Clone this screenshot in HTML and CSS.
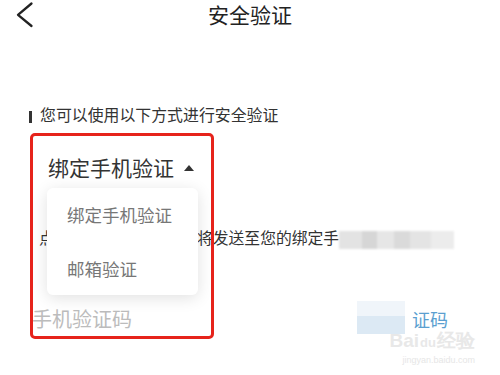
FILE: index.html
```html
<!DOCTYPE html>
<html lang="zh">
<head>
<meta charset="utf-8">
<link rel="stylesheet" href="styles.css">
</head>
<body>
<div class="page">
  <header class="header">
    <div class="back">
      <svg width="50" height="29" viewBox="0 0 50 29"><polyline points="31.5,3.5 18,14.8 31.5,26" fill="none" stroke="#222" stroke-width="2.3" stroke-linecap="round" stroke-linejoin="round"/></svg>
    </div>
    <h1 class="title">安全验证</h1>
    <div></div>
  </header>

  <div class="tip"><span class="tip-bar"></span>您可以使用以下方式进行安全验证</div>

  <div class="select">绑定手机验证<span class="caret"></span></div>

  <div class="hint">点击获取，短信验证码将发送至您的绑定手<span class="blur"></span></div>

  <div class="code-row">
    <span class="placeholder">手机验证码</span>
    <span class="get-code"><span class="code-mask"></span><span class="code-text">证码</span></span>
  </div>

  <div class="menu">
    <div class="menu-item">绑定手机验证</div>
    <div class="menu-item">邮箱验证</div>
  </div>

  <div class="mark-box"></div>

  <div class="watermark">
    <div class="wm-logo">Bai<span class="wm-du">du</span>经验</div>
    <div class="wm-url">jingyan.baidu.com</div>
  </div>
</div>
</body>
</html>
```

FILE: styles.css
```css
* { box-sizing: border-box; }
html, body { margin: 0; padding: 0; background: #fff; }
body {
  font-family: "Noto Sans CJK SC", "Noto Sans", sans-serif;
  color: #333;
}
.page {
  position: relative;
  width: 500px;
  height: 375px;
  overflow: hidden;
}
.header {
  display: grid;
  grid-template-columns: 50px 1fr 50px;
  height: 29px;
}
.back svg { display: block; }
.title {
  margin: 0;
  text-align: center;
  font-size: 21px;
  font-weight: 400;
  line-height: 29px;
  color: #222;
}
.tip {
  display: flex;
  align-items: center;
  margin-top: 76px;
  padding-left: 29px;
  height: 20px;
  font-size: 15.9px;
  line-height: 20px;
  color: #333;
}
.tip-bar {
  display: inline-block;
  width: 3px;
  height: 12px;
  margin-top: 3px;
  margin-right: 8px;
  background: #333;
}
.select {
  display: flex;
  align-items: center;
  margin-top: 28px;
  padding-left: 48px;
  height: 28px;
  font-size: 21px;
  line-height: 28px;
  color: #333;
}
.caret {
  width: 0;
  height: 0;
  margin-left: 10px;
  margin-top: 2px;
  border-left: 5px solid transparent;
  border-right: 5px solid transparent;
  border-bottom: 6px solid #333;
}
.hint {
  display: flex;
  align-items: center;
  margin-top: 46px;
  padding-left: 39px;
  height: 22px;
  font-size: 15.8px;
  line-height: 22px;
  color: #333;
  white-space: nowrap;
}
.blur {
  display: inline-block;
  width: 115px;
  height: 18px;
  margin-top: 3px;
  background: linear-gradient(90deg, #e3e3e3 0 20%, #d6d6d6 20% 33%, #e6e6e6 33% 48%, #dadada 48% 62%, #e4e4e4 62% 80%, #ececec 80% 100%);
  filter: blur(1px);
}
.code-row {
  display: flex;
  align-items: center;
  justify-content: space-between;
  margin-top: 56px;
  padding-left: 32px;
  padding-right: 52px;
  height: 28px;
}
.placeholder {
  font-size: 20px;
  line-height: 28px;
  color: #bcbcbc;
}
.get-code {
  display: flex;
  align-items: center;
}
.code-mask {
  width: 48px;
  height: 33px;
  margin-right: 7px;
  margin-top: -4px;
  background: linear-gradient(180deg, #f0f5fa 0 45%, #dce9f4 45% 100%);
}
.code-text {
  font-size: 18px;
  line-height: 28px;
  color: #5b9fd0;
}
.menu {
  position: absolute;
  left: 47px;
  top: 188px;
  width: 151px;
  height: 107px;
  background: #fff;
  border-radius: 6px;
  box-shadow: 0 3px 16px rgba(0, 0, 0, 0.12);
  display: flex;
  flex-direction: column;
}
.menu-item {
  flex: 1;
  display: flex;
  align-items: center;
  padding-left: 20px;
  font-size: 17.5px;
  color: #777;
}
.mark-box {
  position: absolute;
  left: 30px;
  top: 133px;
  width: 184px;
  height: 206px;
  border: 3px solid #e6231b;
  border-radius: 5px;
}
.watermark {
  position: absolute;
  left: 385px;
  top: 330px;
  width: 90px;
  text-align: right;
  color: #e2e2e2;
  font-family: "Liberation Sans", sans-serif;
}
.wm-logo {
  font-size: 19px;
  line-height: 22px;
  font-weight: 700;
  color: #e8e8e8;
}
.wm-du {
  font-size: 13px;
  margin: 0 1px;
}
.wm-url {
  font-size: 9px;
  line-height: 12px;
  color: #e6e6e6;
}
```
